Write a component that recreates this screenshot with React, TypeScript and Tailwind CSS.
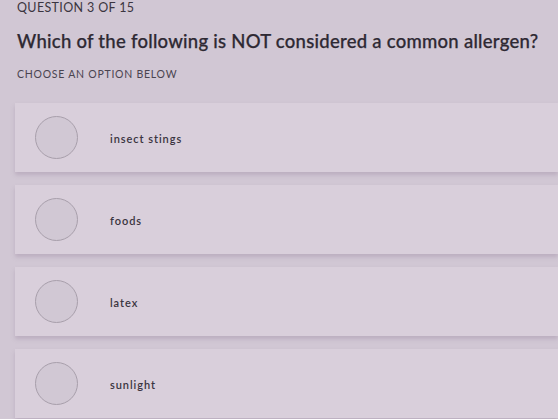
const options = ["insect stings", "foods", "latex", "sunlight"];

export default function App() {
  return (
    <div
      className="w-[558px] h-[419px] overflow-hidden bg-[#d1c7d4] text-[#3b3540]"
      style={{ fontFamily: "Lato, 'Open Sans', sans-serif" }}
    >
      <div className="pl-[17px]">
        <div className="h-[15px] pt-[1px] text-[12.5px] leading-[13px] tracking-[0.35px]">QUESTION 3 OF 15</div>
        <h1 className="mt-[15px] h-[22px] text-[18.5px] leading-[22px] font-medium tracking-[0.26px] text-[#2e2933] [-webkit-text-stroke:0.25px_#2e2933]">
          Which of the following is NOT considered a common allergen?
        </h1>
        <div className="mt-[16px] text-[10.5px] leading-[12px] tracking-[0.75px] text-[#4a4450]">CHOOSE AN OPTION BELOW</div>
      </div>

      <div className="mt-[23px] ml-[15px] flex flex-col gap-[13px]">
        {options.map((opt) => (
          <div
            key={opt}
            className="h-[69px] flex items-center bg-[#d9cfdb] shadow-[0_3px_4px_rgba(150,130,155,0.35)]"
          >
            <div className="ml-[20px] w-[43px] h-[43px] rounded-full border border-[#a89fab] bg-[#d1c8d4]" />
            <span className="ml-[32px] pt-[3px] text-[11px] font-semibold tracking-[0.95px] text-[#3a3440]">{opt}</span>
          </div>
        ))}
      </div>
    </div>
  );
}
